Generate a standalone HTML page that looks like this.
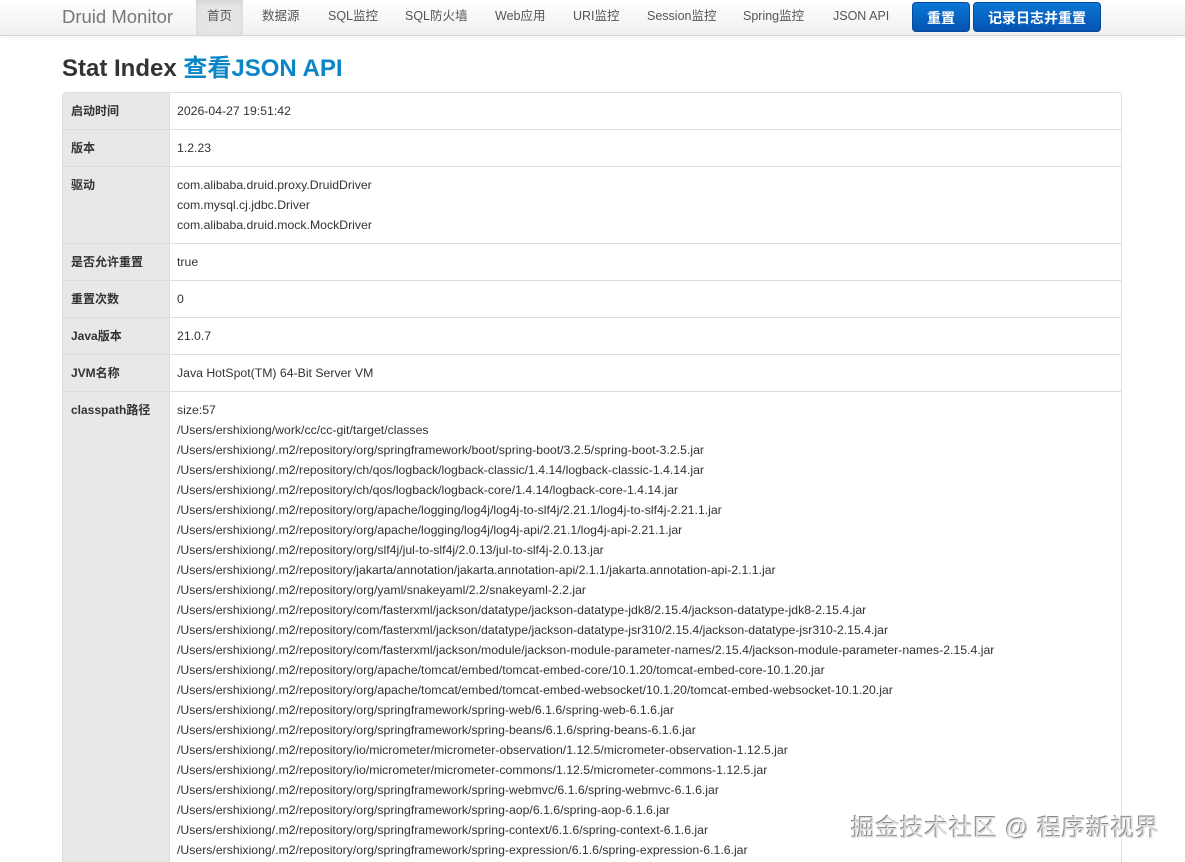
<!DOCTYPE html>
<html style="width:1185px;height:862px;overflow:hidden"><head><meta charset="utf-8">
<style>
*{box-sizing:border-box}
body{margin:0;font-family:"Liberation Sans","Noto Sans CJK SC",sans-serif;font-size:12px;color:#333;background:#fff;width:1185px;height:862px;overflow:hidden;position:relative}
.nav{height:36px;background:linear-gradient(#fff,#f0f0f0);border-bottom:1px solid #d4d4d4;box-shadow:0 1px 6px rgba(0,0,0,.06);position:relative}
.brand{position:absolute;left:62px;top:6px;font-size:18.5px;color:#777;font-weight:300}
.nav a{position:absolute;top:0;height:35px;line-height:33px;font-size:12.5px;color:#555;text-decoration:none}
.nav a.act{background:#e5e5e5;box-shadow:inset 0 2px 6px rgba(0,0,0,.08)}
.btn{position:absolute;top:2px;height:30px;line-height:30px;background:linear-gradient(#0a77d6,#0552b0);color:#fff;border-radius:4px;border:1px solid #044a9e;font-size:14px;font-weight:bold;text-align:center}
h1{position:absolute;left:62px;top:48px;margin:0;font-size:24px;font-weight:bold;color:#333}
h1 span{color:#0a85c8}
table{position:absolute;left:62px;top:92px;width:1060px;border-collapse:separate;border-spacing:0;border:1px solid #ddd;border-radius:4px}
td{border-top:1px solid #ddd;padding:8px 8px 8px 8px;line-height:20px;vertical-align:top}
tr:first-child td{border-top:none}
td.l{width:107px;background:#e8e8e8;font-weight:bold;border-right:1px solid #ddd;padding-left:8px}
td.v{padding-left:7px;font-size:12.27px}
.wm{position:absolute;left:851px;top:808px;font-size:24px;color:#ddd;text-shadow:-1px -1px 0 #888,1px 1px 0 #fff;letter-spacing:0.5px}
</style></head><body>
<div class="nav">
<div class="brand">Druid Monitor</div>
<a class="act" style="left:196px;width:47px;text-align:center">首页</a>
<a style="left:262px">数据源</a>
<a style="left:328px">SQL监控</a>
<a style="left:405px">SQL防火墙</a>
<a style="left:495px">Web应用</a>
<a style="left:573px">URI监控</a>
<a style="left:647px">Session监控</a>
<a style="left:743px">Spring监控</a>
<a style="left:833px">JSON API</a>
<div class="btn" style="left:912px;width:58px">重置</div>
<div class="btn" style="left:973px;width:128px">记录日志并重置</div>
</div>
<h1>Stat Index <span>查看JSON API</span></h1>
<table>
<tr><td class="l">启动时间</td><td class="v">2026-04-27 19:51:42</td></tr>
<tr><td class="l">版本</td><td class="v">1.2.23</td></tr>
<tr><td class="l">驱动</td><td class="v">com.alibaba.druid.proxy.DruidDriver<br>com.mysql.cj.jdbc.Driver<br>com.alibaba.druid.mock.MockDriver</td></tr>
<tr><td class="l">是否允许重置</td><td class="v">true</td></tr>
<tr><td class="l">重置次数</td><td class="v">0</td></tr>
<tr><td class="l">Java版本</td><td class="v">21.0.7</td></tr>
<tr><td class="l">JVM名称</td><td class="v">Java HotSpot(TM) 64-Bit Server VM</td></tr>
<tr><td class="l">classpath路径</td><td class="v">size:57<br>
/Users/ershixiong/work/cc/cc-git/target/classes<br>
/Users/ershixiong/.m2/repository/org/springframework/boot/spring-boot/3.2.5/spring-boot-3.2.5.jar<br>
/Users/ershixiong/.m2/repository/ch/qos/logback/logback-classic/1.4.14/logback-classic-1.4.14.jar<br>
/Users/ershixiong/.m2/repository/ch/qos/logback/logback-core/1.4.14/logback-core-1.4.14.jar<br>
/Users/ershixiong/.m2/repository/org/apache/logging/log4j/log4j-to-slf4j/2.21.1/log4j-to-slf4j-2.21.1.jar<br>
/Users/ershixiong/.m2/repository/org/apache/logging/log4j/log4j-api/2.21.1/log4j-api-2.21.1.jar<br>
/Users/ershixiong/.m2/repository/org/slf4j/jul-to-slf4j/2.0.13/jul-to-slf4j-2.0.13.jar<br>
/Users/ershixiong/.m2/repository/jakarta/annotation/jakarta.annotation-api/2.1.1/jakarta.annotation-api-2.1.1.jar<br>
/Users/ershixiong/.m2/repository/org/yaml/snakeyaml/2.2/snakeyaml-2.2.jar<br>
/Users/ershixiong/.m2/repository/com/fasterxml/jackson/datatype/jackson-datatype-jdk8/2.15.4/jackson-datatype-jdk8-2.15.4.jar<br>
/Users/ershixiong/.m2/repository/com/fasterxml/jackson/datatype/jackson-datatype-jsr310/2.15.4/jackson-datatype-jsr310-2.15.4.jar<br>
/Users/ershixiong/.m2/repository/com/fasterxml/jackson/module/jackson-module-parameter-names/2.15.4/jackson-module-parameter-names-2.15.4.jar<br>
/Users/ershixiong/.m2/repository/org/apache/tomcat/embed/tomcat-embed-core/10.1.20/tomcat-embed-core-10.1.20.jar<br>
/Users/ershixiong/.m2/repository/org/apache/tomcat/embed/tomcat-embed-websocket/10.1.20/tomcat-embed-websocket-10.1.20.jar<br>
/Users/ershixiong/.m2/repository/org/springframework/spring-web/6.1.6/spring-web-6.1.6.jar<br>
/Users/ershixiong/.m2/repository/org/springframework/spring-beans/6.1.6/spring-beans-6.1.6.jar<br>
/Users/ershixiong/.m2/repository/io/micrometer/micrometer-observation/1.12.5/micrometer-observation-1.12.5.jar<br>
/Users/ershixiong/.m2/repository/io/micrometer/micrometer-commons/1.12.5/micrometer-commons-1.12.5.jar<br>
/Users/ershixiong/.m2/repository/org/springframework/spring-webmvc/6.1.6/spring-webmvc-6.1.6.jar<br>
/Users/ershixiong/.m2/repository/org/springframework/spring-aop/6.1.6/spring-aop-6.1.6.jar<br>
/Users/ershixiong/.m2/repository/org/springframework/spring-context/6.1.6/spring-context-6.1.6.jar<br>
/Users/ershixiong/.m2/repository/org/springframework/spring-expression/6.1.6/spring-expression-6.1.6.jar<br>
/Users/ershixiong/.m2/repository/org/springframework/spring-core/6.1.6/spring-core-6.1.6.jar<br>
/Users/ershixiong/.m2/repository/org/springframework/spring-jcl/6.1.6/spring-jcl-6.1.6.jar
</td></tr>
</table>
<div class="wm">掘金技术社区 @ 程序新视界</div>
</body></html>
